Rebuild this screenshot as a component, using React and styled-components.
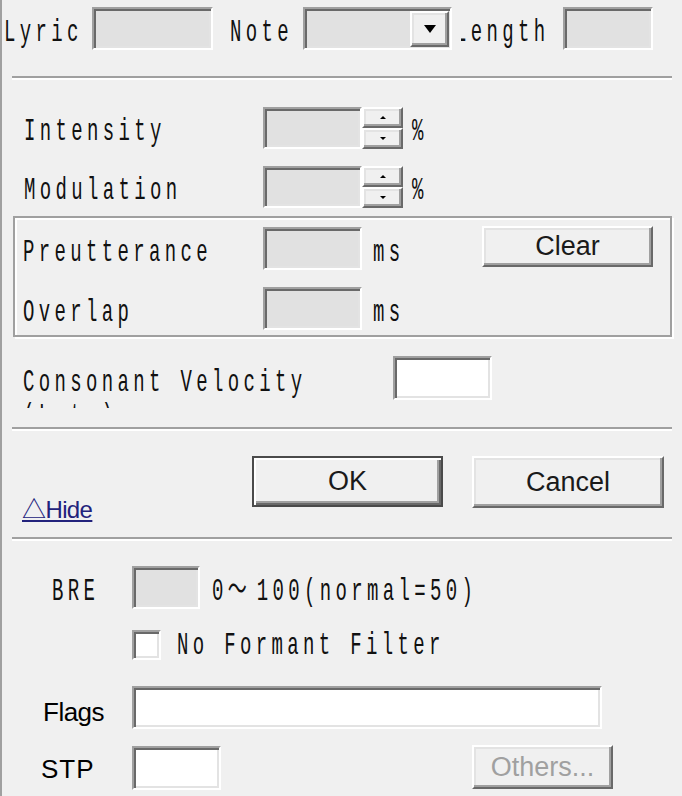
import React from "react";
import styled, { createGlobalStyle } from "styled-components";

const Global = createGlobalStyle`
  html, body { margin: 0; padding: 0; background: #f0f0f0; }
  #root { width: 682px; }
`;

const Window = styled.div`
  width: 682px;
  height: 796px;
  box-sizing: border-box;
  border-left: 2px solid #a0a0a0;
  background: #f0f0f0;
  overflow: hidden;
  display: flex;
  flex-direction: column;
`;

const Row = styled.div`
  display: flex;
  align-items: ${(p) => p.$align || "center"};
  height: ${(p) => p.$h}px;
  margin-top: ${(p) => p.$mt || 0}px;
  flex-shrink: 0;
`;

const Cell = styled.div`
  display: flex;
  align-items: center;
  flex-shrink: 0;
  width: ${(p) => (p.$w ? `${p.$w}px` : "auto")};
  margin-left: ${(p) => p.$ml || 0}px;
  padding-top: ${(p) => p.$pt || 0}px;
  box-sizing: border-box;
  overflow: ${(p) => (p.$clip ? "hidden" : "visible")};
  height: ${(p) => (p.$h ? `${p.$h}px` : "auto")};
`;

const Mono = styled.span`
  display: inline-block;
  font-family: "Liberation Mono", "Noto Sans CJK JP", monospace;
  font-size: 19px;
  letter-spacing: 4.35px;
  line-height: 30px;
  height: 30px;
  white-space: pre;
  color: #111;
  transform: translateY(${(p) => (p.$dy ?? 4)}px) scaleY(1.68);
  margin-left: ${(p) => p.$shift || 0}px;
  margin-top: ${(p) => p.$mt || 0}px;
`;

const Wide = styled.span`
  letter-spacing: 10px;
`;

const Sans = styled.span`
  font-family: "Liberation Sans", Arial, sans-serif;
  font-size: 26px;
  color: #000;
  white-space: pre;
  letter-spacing: ${(p) => p.$ls || 0}px;
`;

const Field = styled.div`
  box-sizing: border-box;
  flex-shrink: 0;
  width: ${(p) => p.$w}px;
  height: ${(p) => p.$h || 43}px;
  margin-left: ${(p) => p.$ml || 0}px;
  margin-top: ${(p) => p.$mt || 0}px;
  background: ${(p) => (p.$white ? "#ffffff" : "#e1e1e1")};
  border: 2px solid;
  border-color: #a0a0a0 #ffffff #ffffff #a0a0a0;
  box-shadow: inset 2px 2px 0 #696969, inset -2px -2px 0 #e3e3e3;
  display: flex;
  align-items: center;
  justify-content: flex-end;
  padding-right: ${(p) => p.$pr || 0}px;
`;

const Raised = styled.div`
  box-sizing: border-box;
  background: #f0f0f0;
  border: 2px solid;
  border-color: #ffffff #696969 #696969 #ffffff;
  box-shadow: inset -2px -2px 0 #a0a0a0, inset 2px 2px 0 #e3e3e3;
  display: flex;
  align-items: center;
  justify-content: center;
`;

const DropBtn = styled(Raised)`
  width: 39px;
  height: 36px;
`;

const Spin = styled.div`
  display: flex;
  flex-direction: column;
  width: 41px;
  height: 42px;
  flex-shrink: 0;
`;

const SpinBtn = styled(Raised)`
  flex: 1;
`;

const Tri = styled.span`
  width: 0;
  height: 0;
  border-left: ${(p) => p.$s}px solid transparent;
  border-right: ${(p) => p.$s}px solid transparent;
  ${(p) =>
    p.$up
      ? `border-bottom: ${p.$t}px solid #000;`
      : `border-top: ${p.$t}px solid #000;`}
`;

const Separator = styled.div`
  flex-shrink: 0;
  height: 0;
  margin: ${(p) => p.$mt}px 10px 0 10px;
  border-top: 2px solid #a0a0a0;
  border-bottom: 2px solid #ffffff;
`;

const Group = styled.div`
  flex-shrink: 0;
  box-sizing: border-box;
  margin: 8px 0 0 11px;
  width: 659px;
  height: 121px;
  border: 2px solid #a0a0a0;
  box-shadow: inset 2px 2px 0 #ffffff, 2px 2px 0 #ffffff;
  display: flex;
  flex-direction: column;
  padding: 9px 0 0 8px;
`;

const Button = styled.button`
  box-sizing: border-box;
  flex-shrink: 0;
  width: ${(p) => p.$w}px;
  height: ${(p) => p.$h}px;
  margin: ${(p) => p.$mt || 0}px 0 0 ${(p) => p.$ml || 0}px;
  padding: 0;
  background: #f0f0f0;
  font-family: "Liberation Sans", Arial, sans-serif;
  font-size: 27px;
  color: ${(p) => (p.disabled ? "#a0a0a0" : "#1a1a1a")};
  border: 2px solid;
  border-color: ${(p) =>
    p.$default ? "#4a4a4a" : "#ffffff #696969 #696969 #ffffff"};
  box-shadow: ${(p) =>
    p.$default
      ? "inset 2px 2px 0 #ffffff, inset -2px -2px 0 #696969, inset -4px -4px 0 #a0a0a0"
      : "inset -2px -2px 0 #a0a0a0, inset 2px 2px 0 #e3e3e3"};
  cursor: default;
`;

const ClipBox = styled.div`
  display: flex;
  flex-direction: column;
  height: 44px;
  overflow: hidden;
  margin: 8px 0 0 21px;
  width: 370px;
  flex-shrink: 0;
`;

const LinkCell = styled.div`
  width: 230px;
  margin: 41px 0 0 20px;
  flex-shrink: 0;
`;

const Link = styled.a`
  font-family: "Liberation Sans", "Noto Sans CJK JP", sans-serif;
  font-size: 24px;
  line-height: 26px;
  letter-spacing: -0.6px;
  color: #22227c;
  text-decoration: underline;
  cursor: pointer;
`;

const Check = styled(Field)`
  width: 29px;
  height: 30px;
`;

const Up = () => <Tri $up $s={3} $t={3} />;
const Down = () => <Tri $s={3} $t={3} />;

const SpinField = () => (
  <>
    <Field $w={99} $h={42} />
    <Spin>
      <SpinBtn>
        <Up />
      </SpinBtn>
      <SpinBtn>
        <Down />
      </SpinBtn>
    </Spin>
  </>
);

export default function App() {
  return (
    <>
      <Global />
      <Window>
        <Row $h={43} $mt={7}>
          <Cell $ml={2} $w={88}>
            <Mono>Lyric</Mono>
          </Cell>
          <Field $w={121} />
          <Cell $ml={17} $w={73}>
            <Mono>Note</Mono>
          </Cell>
          <Field $w={149} $pr={1}>
            <DropBtn>
              <Tri $s={6} $t={8} />
            </DropBtn>
          </Field>
          <Cell $ml={9} $w={102} $clip $h={43}>
            <Mono $shift={-6}>Length</Mono>
          </Cell>
          <Field $w={90} />
        </Row>

        <Separator $mt={26} />

        <Row $h={42} $mt={27}>
          <Cell $ml={22} $w={239}>
            <Mono>Intensity</Mono>
          </Cell>
          <SpinField />
          <Cell $ml={9}>
            <Mono>%</Mono>
          </Cell>
        </Row>

        <Row $h={43} $mt={16}>
          <Cell $ml={22} $w={239}>
            <Mono>Modulation</Mono>
          </Cell>
          <SpinField />
          <Cell $ml={9}>
            <Mono>%</Mono>
          </Cell>
        </Row>

        <Group>
          <Row $h={43} $align="flex-start">
            <Cell $w={240} $h={43}>
              <Mono>Preutterance</Mono>
            </Cell>
            <Field $w={99} />
            <Cell $ml={11} $w={109} $h={43}>
              <Mono>ms</Mono>
            </Cell>
            <Button $w={171} $h={41} $mt={-1}>
              Clear
            </Button>
          </Row>
          <Row $h={43} $mt={17}>
            <Cell $w={240}>
              <Mono>Overlap</Mono>
            </Cell>
            <Field $w={99} />
            <Cell $ml={11}>
              <Mono>ms</Mono>
            </Cell>
          </Row>
        </Group>

        <Row $h={44} $mt={19} $align="flex-start">
          <ClipBox>
            <Mono>Consonant Velocity</Mono>
            <Mono $mt={4}>(Late)</Mono>
          </ClipBox>
          <Field $w={99} $h={44} $white />
        </Row>

        <Separator $mt={27} />

        <Row $h={81} $mt={25} $align="flex-start">
          <LinkCell>
            <Link>△Hide</Link>
          </LinkCell>
          <Button $w={191} $h={51} $default>
            OK
          </Button>
          <Button $w={192} $h={52} $ml={29}>
            Cancel
          </Button>
        </Row>

        <Separator $mt={0} />

        <Row $h={43} $mt={25}>
          <Cell $ml={50} $w={80}>
            <Mono>BRE</Mono>
          </Cell>
          <Field $w={68} />
          <Cell $ml={12}>
            <Mono>
              0<Wide>～</Wide>100(normal=50)
            </Mono>
          </Cell>
        </Row>

        <Row $h={30} $mt={21}>
          <Check $w={29} $h={30} $ml={130} $white />
          <Cell $ml={16}>
            <Mono $dy={1}>No Formant Filter</Mono>
          </Cell>
        </Row>

        <Row $h={43} $mt={26}>
          <Cell $ml={41} $w={89} $pt={9}>
            <Sans $ls={-0.5}>Flags</Sans>
          </Cell>
          <Field $w={470} $white />
        </Row>

        <Row $h={45} $mt={16} $align="flex-start">
          <Cell $ml={39} $w={91} $h={45} $pt={3}>
            <Sans $ls={1}>STP</Sans>
          </Cell>
          <Field $w={89} $h={44} $mt={1} $white />
          <Button $w={141} $h={44} $ml={251} disabled>
            Others...
          </Button>
        </Row>
      </Window>
    </>
  );
}
